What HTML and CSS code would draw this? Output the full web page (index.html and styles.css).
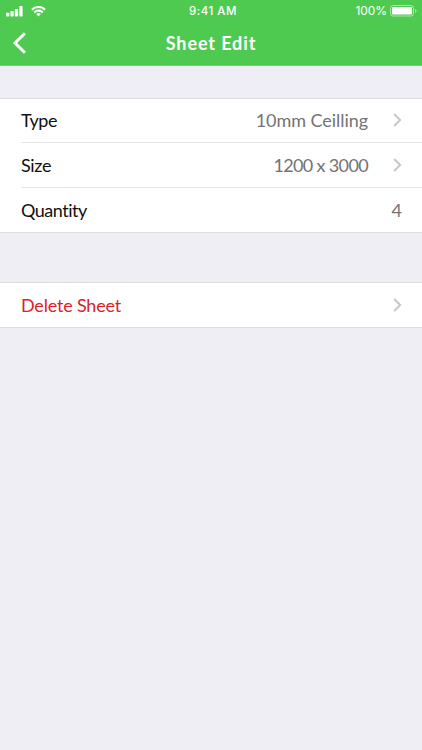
FILE: index.html
```
<!DOCTYPE html>
<html lang="en">
<head>
<meta charset="utf-8">
<title>Sheet Edit</title>
<link rel="stylesheet" href="styles.css">
</head>
<body>
<header class="header">
  <div class="status">
    <div class="status-left">
      <svg width="17" height="11" viewBox="0 0 17 11" fill="#fff"><rect x="0" y="6.8" width="3.3" height="3.7" rx=".8"/><rect x="4.4" y="5" width="3.3" height="5.5" rx=".8"/><rect x="8.8" y="2.9" width="3.3" height="7.6" rx=".8"/><rect x="13.3" y="0" width="3.3" height="10.5" rx=".8"/></svg>
      <svg class="wifi" width="15" height="11" viewBox="0 0 15 11" fill="none" stroke="#fff" stroke-width="2.1"><path d="M.9 3.7a9.3 9.3 0 0 1 13.2 0M3.2 6.4a6 6 0 0 1 8.6 0"/><path d="M5.2 8.1a3.3 3.3 0 0 1 4.6 0L7.5 10.5z" fill="#fff" stroke="none"/></svg>
    </div>
    <span class="time">9:41 AM</span>
    <div class="status-right">
      <span class="percent">100%</span>
      <svg width="27" height="12" viewBox="0 0 27 12"><rect x=".5" y=".5" width="23" height="10.5" rx="2.5" fill="none" stroke="#fff" stroke-opacity=".5"/><rect x="2" y="2" width="20" height="7.5" rx="1" fill="#fff"/><path d="M25 4v3.8q1.5-.5 1.5-1.9T25 4z" fill="#fff" fill-opacity=".5"/></svg>
    </div>
  </div>
  <nav class="nav">
    <svg class="back" width="14" height="22" viewBox="0 0 14 22" fill="none" stroke="#fff" stroke-width="3"><path d="M12.9 1.2 3 11l9.9 9.8"/></svg>
    <h1 class="title">Sheet Edit</h1>
  </nav>
</header>
<main>
  <section class="group">
    <div class="row"><span class="label type">Type</span><span class="value ceiling">10mm Ceilling</span><svg class="chevron" width="9" height="14" viewBox="0 0 9 14"><path d="m1.2 1 6 6-6 6"/></svg></div>
    <div class="row"><span class="label size">Size</span><span class="value dims">1200 x 3000</span><svg class="chevron" width="9" height="14" viewBox="0 0 9 14"><path d="m1.2 1 6 6-6 6"/></svg></div>
    <div class="row"><span class="label quantity">Quantity</span><span class="value">4</span></div>
  </section>
  <section class="group">
    <div class="row"><span class="label delete">Delete Sheet</span><svg class="chevron" width="9" height="14" viewBox="0 0 9 14"><path d="m1.2 1 6 6-6 6"/></svg></div>
  </section>
</main>
</body>
</html>
```
FILE: styles.css
```
* { box-sizing: border-box; }
body { margin: 0; height: 750px; overflow: hidden; background: #efeef4; color: #111; font-family: Lato, sans-serif; }
.header { height: 66px; background: #4fca50; color: #fff; border-bottom: 1px solid #70ce74; }
.status { height: 22px; display: grid; grid-template-columns: 1fr auto 1fr; align-items: center; padding: 0 5px 0 6px; font-family: Inter, sans-serif; }
.status svg { display: block; }
.status-left, .status-right { display: flex; align-items: center; }
.wifi { margin-left: 8px; }
.time { font-size: 11.5px; font-weight: 500; letter-spacing: .5px; padding-left: 3px; }
.status-right { justify-content: flex-end; gap: 3px; }
.percent { font-size: 12px; line-height: 14px; margin-top: -1px; letter-spacing: -.1px; }
.nav { height: 42px; display: grid; grid-template-columns: 40px 1fr 40px; align-items: center; }
.back { margin-left: 12px; }
.title { margin: 0; text-align: center; font-size: 18px; line-height: 24px; font-weight: 700; letter-spacing: .9px; }
.group { margin-top: 32px; padding-left: 21px; background: #fff; border-top: 1px solid #dddce1; border-bottom: 1px solid #dddce1; }
.group + .group { margin-top: 49px; }
.row { height: 45px; display: flex; align-items: center; padding-right: 20px; font-size: 18px; line-height: 24px; }
.row:first-child { height: 43px; padding-bottom: 1px; }
.group + .group .row { height: 44px; padding-bottom: 1px; }
.row + .row { border-top: 1px solid #e4e4e6; }
.type { letter-spacing: -.5px; }
.size { letter-spacing: -.35px; }
.quantity { letter-spacing: -.5px; }
.value { margin-left: auto; color: #737373; }
.ceiling { letter-spacing: -.05px; }
.dims { letter-spacing: -.65px; }
.chevron { flex: none; margin-left: 25px; fill: none; stroke: #c5c5ca; stroke-width: 1.9; }
.delete { color: #db2229; margin-right: auto; letter-spacing: -.2px; }
```
